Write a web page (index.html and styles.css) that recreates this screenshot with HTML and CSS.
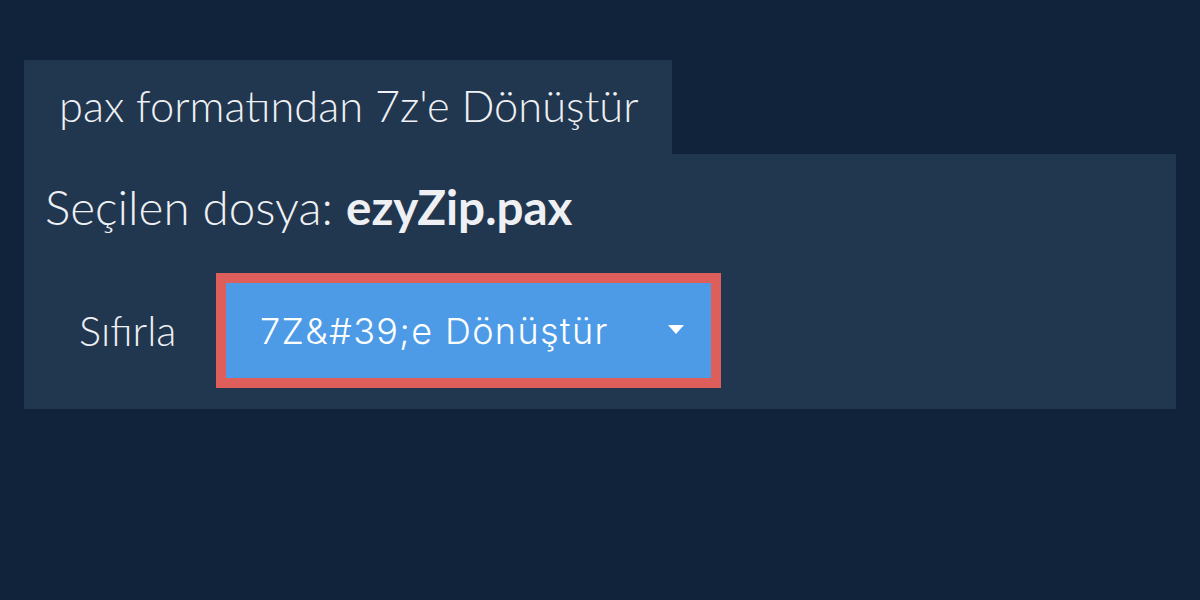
FILE: index.html
```html
<!DOCTYPE html>
<html lang="tr">
<head>
<meta charset="utf-8">
<link rel="stylesheet" href="styles.css">
</head>
<body>
<div class="wrap">
  <div class="tab">pax formatından 7z'e Dönüştür</div>
  <div class="panel">
    <div class="file">Seçilen dosya: <b>ezyZip.pax</b></div>
    <div class="actions">
      <span class="reset">Sıfırla</span>
      <div class="btn-frame">
        <div class="btn">
          <span class="btn-label">7Z&amp;#39;e Dönüştür</span>
          <span class="caret"></span>
        </div>
      </div>
    </div>
  </div>
</div>
</body>
</html>
```

FILE: styles.css
```css
html, body {
  margin: 0;
  padding: 0;
  background: #11233a;
  width: 1200px;
  height: 600px;
  overflow: hidden;
}
.wrap {
  padding: 60px 24px 0 24px;
  font-family: Lato, "Noto Sans", sans-serif;
  color: #eef0f3;
}
.tab {
  display: inline-flex;
  align-items: center;
  height: 94px;
  width: 648px;
  padding: 0 0 4px 35px;
  background: #21364f;
  font-size: 43.4px;
  font-weight: 300;
  box-sizing: border-box;
  white-space: nowrap;
}
.panel {
  background: #21364f;
  height: 255px;
  box-sizing: border-box;
  padding: 25px 21px 0 21px;
}
.file {
  font-size: 47.6px;
  font-weight: 300;
  line-height: 56px;
  white-space: nowrap;
}
.file b {
  font-weight: 700;
}
.actions {
  display: flex;
  align-items: center;
  margin-top: 38px;
}
.reset {
  font-size: 41.5px;
  font-weight: 300;
  padding-left: 34px;
  width: 137px;
  padding-bottom: 2px;
}
.btn-frame {
  background: #de5e5c;
  padding: 10px;
}
.btn {
  display: flex;
  align-items: center;
  width: 485px;
  height: 95px;
  box-sizing: border-box;
  padding: 0 27px 0 34px;
  background: #4d9be7;
  color: #ffffff;
  font-family: Inter, Roboto, sans-serif;
  font-size: 36px;
  font-weight: 300;
  letter-spacing: 1.35px;
  white-space: nowrap;
}
.btn-label {
  flex: 1;
}
.caret {
  width: 0;
  height: 0;
  margin-top: -2px;
  border-left: 8.5px solid transparent;
  border-right: 8.5px solid transparent;
  border-top: 9px solid #ffffff;
}
```
